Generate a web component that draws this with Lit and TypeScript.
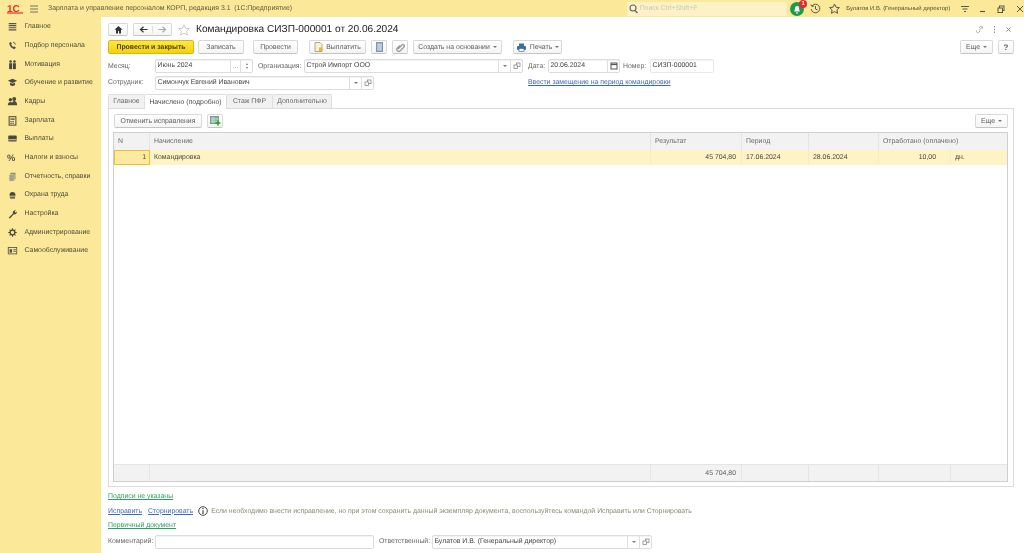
import { LitElement, html, css, svg } from "lit";
import { customElement } from "lit/decorators.js";

const ic = (w: number, h: number, body: unknown) =>
  html`<svg class="ic" width=${w} height=${h} viewBox="0 0 ${w} ${h}">${body}</svg>`;

const menu: [string, unknown][] = [
  ["Главное", svg`<path d="M2 3h9M2 5.500h9M2 8h9M2 10.500h9" stroke="#55534a" stroke-width="1.400"/>`],
  ["Подбор персонала", svg`<path d="M3 3c-1 3 2 7 6 8l1.500-2-2-1.500-1 .7C6.500 7.500 5.500 6.500 5 5.500l.8-1L4.500 2.500z" fill="#55534a"/><path d="M7 2.500a3.500 3.500 0 0 1 3 3" stroke="#55534a" fill="none"/>`],
  ["Мотивация", svg`<rect x="2.500" y="5" width="3.500" height="7" fill="#4a483f"/><rect x="7" y="5" width="3.500" height="7" fill="#4a483f"/><circle cx="4.200" cy="3" r="1.500" fill="#4a483f"/><circle cx="8.800" cy="3" r="1.500" fill="#4a483f"/>`],
  ["Обучение и развитие", svg`<path d="M1 4.500 6.500 2 12 4.500 6.500 7z" fill="#4a483f"/><path d="M3.500 6.500v3l3 1.500 3-1.500v-3l-3 1.500z" fill="#4a483f"/>`],
  ["Кадры", svg`<circle cx="4" cy="4.500" r="2" fill="#4a483f"/><circle cx="8.500" cy="3.500" r="2.300" fill="#4a483f"/><path d="M1 11c0-3 1.500-4 3-4s3 1 3 4zM5.500 11c0-3.500 1.500-5 3-5s3.500 1.500 3.500 5z" fill="#4a483f"/>`],
  ["Зарплата", svg`<rect x="2.500" y="2" width="8" height="10" fill="none" stroke="#4a483f" stroke-width="1.200"/><path d="M4 4h5v1.500H4zM4 7h1.500v1.200H4zM6.500 7H8v1.200H6.500zM4 9.300h1.500v1.200H4zM6.500 9.300H8v1.200H6.500z" fill="#4a483f"/>`],
  ["Выплаты", svg`<rect x="1.500" y="3" width="10" height="7" rx="1" fill="#4a483f"/><rect x="1.500" y="7.500" width="10" height="1" fill="#fbe999"/>`],
  ["Налоги и взносы", svg`<text x="0" y="10.500" font-size="11" font-weight="700" font-family="Liberation Sans" fill="#55534a">%</text>`],
  ["Отчетность, справки", svg`<path d="M4 2h6v8H4z" fill="#8f8d78"/><path d="M2.500 4h6v8h-6z" fill="#a3a18a" stroke="#fbe999" stroke-width=".5"/>`],
  ["Охрана труда", svg`<path d="M3 7a3.500 3.500 0 0 1 7 0v1H3z" fill="#4a483f"/><path d="M3 9h7l-1 2.500H4z" fill="#6b695c"/>`],
  ["Настройка", svg`<path d="M2 11.500 7 6.500a2.800 2.800 0 0 1 3.500-3.700L9 4.500l1 1 1.500-1.500A2.800 2.800 0 0 1 8 7.500l-4.500 5z" fill="#4a483f"/>`],
  ["Администрирование", svg`<circle cx="6.500" cy="6.500" r="2.800" fill="none" stroke="#4a483f" stroke-width="1.600"/><path d="M6.500 1.500v2M6.500 9.500v2M1.500 6.500h2M9.500 6.500h2M3 3l1.400 1.400M8.600 8.600 10 10M10 3 8.600 4.400M4.400 8.600 3 10" stroke="#4a483f" stroke-width="1.300"/>`],
  ["Самообслуживание", svg`<rect x="1.500" y="3" width="10" height="7.500" fill="none" stroke="#55534a"/><rect x="3" y="5" width="3" height="4" fill="#55534a"/><path d="M7.500 5.500h3M7.500 7.500h3" stroke="#55534a"/>`],
];

const dropArrow = html`<span class="arrow"></span>`;
const openIcon = ic(8, 8, svg`<rect x="3.500" y="1" width="3.500" height="3.500" fill="none" stroke="#888" stroke-width=".8"/><rect x="1" y="3" width="3.500" height="3.500" fill="#fff" stroke="#888" stroke-width=".8"/>`);

@customElement("app-root")
export class AppRoot extends LitElement {
  static styles = css`
    :host { display: flex; flex-direction: column; width: 1024px; height: 553px; overflow: hidden; background: #fff;
      font: 6.900px "Liberation Sans", Arial, sans-serif; color: #444; text-rendering: geometricPrecision; filter: blur(.25px); }
    * { box-sizing: border-box; }
    .ic { display: block; flex: none; }
    .top { height: 17px; flex: none; background: #fbe999; display: flex; align-items: center; color: #5c593f; }
    .logo { width: 16px; margin-left: 7px; }
    .burger { margin-left: 7px; }
    .apptitle { margin-left: 10px; width: 580px; white-space: nowrap; }
    .search { width: 161px; height: 14px; background: #fcf2c6; display: flex; align-items: center; gap: 2px; padding-left: 2px; color: #c9c7b8; }
    .bell { margin-left: 3px; position: relative; width: 14px; height: 14px; }
    .badge { position: absolute; right: -3px; top: -2px; width: 8px; height: 8px; border-radius: 50%; background: #e8262c; color: #fff; font-size: 6px; line-height: 8px; text-align: center; font-weight: 700; }
    .hist { margin-left: 6px; }
    .fav { margin-left: 8px; }
    .user { margin-left: 6px; width: 110px; font-size: 5.900px; white-space: nowrap; color: #4f4d38; }
    .tctl { margin-left: 5px; }
    .tctl2 { margin-left: 9px; }
    .tctl3 { margin-left: 11px; }
    .body { flex: 1; min-height: 0; display: flex; }
    .side { width: 101px; flex: none; background: #fbe999; padding-top: .5px; }
    .mi { height: 18.670px; display: flex; align-items: center; color: #4c4a38; white-space: nowrap; }
    .mi .mic { width: 24.500px; flex: none; padding-left: 7px; }
    .mic .ic { width: 11px; height: 11px; }
    .main { flex: 1; min-width: 0; padding: 0 10px 0 7px; display: flex; flex-direction: column; }
    .head { height: 21px; margin-top: 2px; flex: none; display: flex; align-items: center; }
    .btn { height: 13.500px; border: 1px solid #d8d8d8; border-bottom-color: #c4c4c4; border-radius: 2px; background: linear-gradient(#fff, #f4f4f4);
      display: flex; align-items: center; justify-content: center; gap: 3px; color: #5a5a5a; white-space: nowrap; flex: none; padding: 0; }
    .home { width: 20px; }
    .nav { width: 39px; margin-left: 5px; gap: 0; }
    .nav span { flex: 1; display: flex; justify-content: center; }
    .nav span + span { border-left: 1px solid #e0e0e0; }
    .star { margin-left: 6px; }
    .title { margin-left: 6px; font-size: 10.150px; color: #1c1c1c; white-space: nowrap; flex: 1; }
    .hctl { margin-right: 9px; }
    .hctl1 { margin-right: 9px; }
    .hctl2 { margin-right: 2px; }
    .bar { height: 14px; flex: none; display: flex; align-items: center; }
    .primary { width: 86px; background: linear-gradient(#fde64a, #f6d200); border-color: #d6b61c; color: #453f0c; font-weight: 700; }
    .w46 { width: 46px; margin-left: 4px; }
    .w45 { width: 45px; margin-left: 9px; }
    .w57 { width: 57px; margin-left: 11px; }
    .w16 { width: 16px; margin-left: 5px; }
    .w89 { width: 89px; margin-left: 5px; }
    .w49 { width: 49px; margin-left: 11px; }
    .more { width: 33px; margin-left: auto; }
    .help { width: 16px; margin-left: 5px; font-weight: 700; font-size: 8px; }
    .arrow { width: 0; height: 0; border: 2px solid transparent; border-top: 2.500px solid #777; border-bottom: 0; flex: none; }
    .row { height: 14px; flex: none; display: flex; align-items: center; color: #666; white-space: nowrap; }
    .r1 { margin-top: 5px; }
    .r2 { margin-top: 2.500px; }
    .lbl { width: 47px; flex: none; }
    .field { height: 14px; border: 1px solid #dcdcdc; border-radius: 2px; display: flex; align-items: stretch; background: #fff; color: #444; flex: none; box-shadow: inset 0 1px 1px #f2f2f2; }
    .field .v { flex: 1; padding-left: 1.500px; line-height: 12px; overflow: hidden; }
    .cell { width: 12px; border-left: 1px solid #dedede; display: flex; align-items: center; justify-content: center; flex: none; }
    .spin { flex-direction: column; gap: 2px; }
    .up { width: 0; height: 0; border: 1.500px solid transparent; border-bottom: 2px solid #777; border-top: 0; }
    .dn { width: 0; height: 0; border: 1.500px solid transparent; border-top: 2px solid #777; border-bottom: 0; }
    .month { width: 98px; }
    .dots { width: 10px; color: #888; }
    .org { width: 219px; }
    .emp { width: 219px; }
    .date { width: 72px; }
    .num { width: 64px; border-color: #e8e8e8; }
    .l-org { margin-left: 5px; width: 46px; }
    .l-date { margin-left: 5px; width: 20px; }
    .l-num { margin-left: 3px; width: 27px; }
    .link { color: #3f68b5; text-decoration: underline; white-space: nowrap; }
    .green { color: #2f9f5d; text-decoration: underline; white-space: nowrap; }
    .sublink { margin-left: 154px; }
    .tabs { height: 14px; margin-top: 4.500px; flex: none; display: flex; align-items: stretch; color: #666; position: relative; z-index: 1; }
    .tab { background: #f1f1f1; border: 1px solid #dedede; border-left: 0; border-bottom: 0; display: flex; align-items: center; justify-content: center; white-space: nowrap; border-radius: 2px 2px 0 0; }
    .tab:first-child { border-left: 1px solid #dedede; }
    .tab.on { background: #fff; height: 15px; color: #4c4c4c; }
    .t1 { width: 37px; } .t2 { width: 82px; } .t3 { width: 46px; } .t4 { width: 59px; }
    .panel { flex: 1; min-height: 0; border: 1px solid #dcdcdc; padding: 5px 5px 4px 5px; display: flex; flex-direction: column; }
    .ptool { height: 14px; flex: none; display: flex; align-items: center; }
    .cancel { width: 88px; }
    .more2 { width: 33px; margin-left: auto; }
    .table { flex: 1; min-height: 0; margin: 4px 0 0 -1px; border: 1px solid #cfcfcf; display: flex; flex-direction: column; }
    .tr { display: grid; grid-template-columns: 36px 501px 91px 67px 70px 72px 1fr; flex: none; }
    .th { height: 17px; background: #f2f2f2; }
    .th > div { border-right: 1px solid #e4e4e4; padding-left: 4px; display: flex; align-items: center; color: #6a6a6a; white-space: nowrap; }
    .th > div:last-child { border-right: 0; }
    .span2 { grid-column: span 2; }
    .td { height: 15px; background: #fdf3c5; }
    .td > div { border-right: 1px solid #f7ecc0; padding: 0 4px; display: flex; align-items: center; color: #49493e; }
    .td > div:last-child { border-right: 0; }
    .td > .r { justify-content: flex-end; padding-right: 5px; }
    .td > .wide { padding-right: 14px; }
    .td > .cur { background: #fde9a0; border: 1px solid #f1be2b; padding-right: 3px; }
    .spacer { flex: 1; }
    .tf { height: 17px; background: #f2f2f2; border-top: 1px solid #e4e4e4; }
    .tf > div { border-right: 1px solid #e4e4e4; padding: 0 5px; display: flex; align-items: center; color: #5e5e5e; }
    .tf > div:last-child { border-right: 0; }
    .tf > .r { justify-content: flex-end; }
    .foot { height: 66px; flex: none; display: flex; flex-direction: column; }
    .fr { display: flex; align-items: center; height: 14.500px; flex: none; white-space: nowrap; }
    .fr1 { margin-top: 2.500px; }
    .gap6 { margin-left: 6px; }
    .info { margin-left: 5px; margin-right: 3px; }
    .note { color: #8a8972; }
    .comment { width: 219px; }
    .resp { width: 220px; }
    .l-resp { margin-left: 5px; width: 53px; }
    .cmtrow { margin-top: 1.500px; color: #666; }
  `;

  render() {
    return html`
      <div class="top">
        <div class="logo">${ic(16, 11, svg`<text x="0" y="8.500" font-size="10" font-weight="700" font-family="Liberation Sans" fill="#e2342a">1С</text><path d="M0 10h16" stroke="#e2342a" stroke-width="1.200"/>`)}</div>
        <div class="burger">${ic(8, 8, svg`<path d="M0 1h8M0 4h8M0 7h8" stroke="#77735a"/>`)}</div>
        <div class="apptitle">Зарплата и управление персоналом КОРП, редакция 3.1&nbsp; (1С:Предприятие)</div>
        <div class="search">${ic(9, 10, svg`<circle cx="4" cy="4" r="3" fill="none" stroke="#666" stroke-width="1.100"/><path d="M6 6.500 8.500 9" stroke="#666" stroke-width="1.200"/>`)}Поиск Ctrl+Shift+F</div>
        <div class="bell">${ic(14, 14, svg`<circle cx="7" cy="7" r="7" fill="#1f9a4b"/><path d="M4 9.500c1-1 .7-2 1-3.500a2 2 0 0 1 4 0c.3 1.500 0 2.500 1 3.500zM6 10.500h2v1H6z" fill="#fff"/>`)}<span class="badge">1</span></div>
        <div class="hist">${ic(11, 11, svg`<path d="M2 3a4.300 4.300 0 1 1-.8 3" fill="none" stroke="#5b5a48"/><path d="M.8 1.500 2 3.500l2-.5" fill="none" stroke="#5b5a48"/><path d="M5.500 3v3l2 1" fill="none" stroke="#5b5a48"/>`)}</div>
        <div class="fav">${ic(11, 11, svg`<path d="M5.500 1 7 4.200l3.400.4-2.500 2.300.7 3.400-3.100-1.700-3.100 1.700.7-3.400L.6 4.600 4 4.200z" fill="none" stroke="#5b5a48"/>`)}</div>
        <div class="user">Булатов И.В. (Генеральный директор)</div>
        <div class="tctl">${ic(8, 8, svg`<path d="M0 1.500h8M1.500 4h5M3 6.500h2" stroke="#5b5a48"/>`)}</div>
        <div class="tctl2">${ic(8, 8, svg`<path d="M2 6.500h5" stroke="#5b5a48" stroke-width="1.200"/>`)}</div>
        <div class="tctl3">${ic(8, 8, svg`<rect x="2.500" y="1" width="4.500" height="4.500" fill="none" stroke="#5b5a48"/><rect x="1" y="3" width="4.500" height="4.500" fill="#fbe999" stroke="#5b5a48"/>`)}</div>
        <div class="tctl3">${ic(8, 8, svg`<path d="M1 1l6 6M7 1 1 7" stroke="#5b5a48"/>`)}</div>
      </div>
      <div class="body">
        <nav class="side">
          ${menu.map(([t, i]) => html`<div class="mi"><span class="mic">${ic(13, 13, i)}</span>${t}</div>`)}
        </nav>
        <main class="main">
          <div class="head">
            <div class="btn home">${ic(9, 9, svg`<path d="M4.500 1 .5 4.800h1.500V8.500h2V6h1v2.500h2V4.800h1.500z" fill="#333"/>`)}</div>
            <div class="btn nav">
              <span>${ic(9, 7, svg`<path d="M8.500 3.500H2M4.500.8 1.500 3.500l3 2.700" fill="none" stroke="#333" stroke-width="1.200"/>`)}</span>
              <span>${ic(9, 7, svg`<path d="M.5 3.500H7M4.500.8l3 2.700-3 2.700" fill="none" stroke="#aaa" stroke-width="1.200"/>`)}</span>
            </div>
            <div class="star">${ic(12, 12, svg`<path d="M6 .8 7.600 4.300l3.800.4-2.800 2.600.8 3.800L6 9.200l-3.400 1.900.8-3.800L.6 4.700l3.800-.4z" fill="#fff" stroke="#c9c9c9"/>`)}</div>
            <div class="title">Командировка СИЗП-000001 от 20.06.2024</div>
            <div class="hctl">${ic(9, 9, svg`<path d="M4 5.500 7.800 1.800M1.500 5.500a1.500 1.500 0 0 0 2 2L5 6M4 3l1.500-1.500a1.500 1.500 0 0 1 2 2" fill="none" stroke="#aaa"/>`)}</div>
            <div class="hctl1">${ic(3, 9, svg`<path d="M1.500 1v1.500M1.500 3.800v1.500M1.500 6.500V8" stroke="#888"/>`)}</div>
            <div class="hctl2">${ic(7, 7, svg`<path d="M1.500 1.500l4 4M5.500 1.500l-4 4" stroke="#888"/>`)}</div>
          </div>
          <div class="bar">
            <div class="btn primary">Провести и закрыть</div>
            <div class="btn w46">Записать</div>
            <div class="btn w45">Провести</div>
            <div class="btn w57">${ic(9, 10, svg`<path d="M1 .5h5l2 2v7H1z" fill="#f5f1df" stroke="#b5a878"/><path d="M5 5.500h3.500v3.500H5z" fill="#e6b93a"/>`)}Выплатить</div>
            <div class="btn w16">${ic(7, 10, svg`<rect x=".5" y=".5" width="6" height="9" fill="#a8bcd2" stroke="#7e93ab"/><path d="M1.500 3h4M1.500 5h4M1.500 7h4" stroke="#e4ecf4" stroke-width=".7"/>`)}</div>
            <div class="btn w16">${ic(9, 9, svg`<path d="M2 6 6 2a1.400 1.400 0 0 1 2 2L4 8a2 2 0 0 1-3-2.500L4 2.500" fill="none" stroke="#999" stroke-width="1.300"/>`)}</div>
            <div class="btn w89">Создать на основании ${dropArrow}</div>
            <div class="btn w49">${ic(11, 9, svg`<rect x="3" y=".5" width="5" height="2.500" fill="#3f6d9c"/><rect x="1" y="3" width="9" height="4" rx="1" fill="#3f6d9c"/><rect x="3" y="5.500" width="5" height="3" fill="#fff" stroke="#3f6d9c" stroke-width=".7"/>`)}Печать ${dropArrow}</div>
            <div class="btn more">Еще ${dropArrow}</div>
            <div class="btn help">?</div>
          </div>
          <div class="row r1">
            <span class="lbl">Месяц:</span>
            <div class="field month"><span class="v">Июнь 2024</span><span class="cell dots">...</span><span class="cell spin"><i class="up"></i><i class="dn"></i></span></div>
            <span class="l-org">Организация:</span>
            <div class="field org"><span class="v">Строй Импорт ООО</span><span class="cell">${dropArrow}</span><span class="cell">${openIcon}</span></div>
            <span class="l-date">Дата:</span>
            <div class="field date"><span class="v">20.06.2024</span><span class="cell">${ic(8, 8, svg`<rect x="1" y="1" width="6" height="6" fill="none" stroke="#555"/><path d="M1 2.500h6" stroke="#555" stroke-width="1.200"/>`)}</span></div>
            <span class="l-num">Номер:</span>
            <div class="field num"><span class="v">СИЗП-000001</span></div>
          </div>
          <div class="row r2">
            <span class="lbl">Сотрудник:</span>
            <div class="field emp"><span class="v">Симончук Евгений Иванович</span><span class="cell">${dropArrow}</span><span class="cell">${openIcon}</span></div>
            <span class="link sublink">Ввести замещение на период командировки</span>
          </div>
          <div class="tabs">
            <div class="tab t1">Главное</div>
            <div class="tab t2 on">Начислено (подробно)</div>
            <div class="tab t3">Стаж ПФР</div>
            <div class="tab t4">Дополнительно</div>
          </div>
          <section class="panel">
            <div class="ptool">
              <div class="btn cancel">Отменить исправления</div>
              <div class="btn w16">${ic(11, 10, svg`<rect x=".5" y=".5" width="8" height="7" fill="#8fb9a3" stroke="#6e9a84"/><path d="M3 .5v7M.5 3h8M.5 5.300h8" stroke="#dcebe2" stroke-width=".6"/><path d="M8 4.500v5M5.500 7h5" stroke="#2aa52a" stroke-width="1.600"/>`)}</div>
              <div class="btn more2">Еще ${dropArrow}</div>
            </div>
            <div class="table">
              <div class="tr th">
                <div>N</div><div>Начисление</div><div>Результат</div><div>Период</div><div></div><div class="span2">Отработано (оплачено)</div>
              </div>
              <div class="tr td">
                <div class="r cur">1</div><div>Командировка</div><div class="r">45 704,80</div><div>17.06.2024</div><div>28.06.2024</div><div class="r wide">10,00</div><div>дн.</div>
              </div>
              <div class="spacer"></div>
              <div class="tr tf">
                <div></div><div></div><div class="r">45 704,80</div><div></div><div></div><div></div><div></div>
              </div>
            </div>
          </section>
          <div class="foot">
            <div class="fr fr1"><span class="green">Подписи не указаны</span></div>
            <div class="fr">
              <span class="link">Исправить</span><span class="link gap6">Сторнировать</span>
              <span class="info">${ic(10, 10, svg`<circle cx="5" cy="5" r="4.300" fill="none" stroke="#444"/><path d="M5 4.300V8M5 2v1.300" stroke="#444" stroke-width="1.200"/>`)}</span>
              <span class="note">Если необходимо внести исправление, но при этом сохранить данный экземпляр документа, воспользуйтесь командой Исправить или Сторнировать</span>
            </div>
            <div class="fr"><span class="green">Первичный документ</span></div>
            <div class="row cmtrow">
              <span class="lbl">Комментарий:</span>
              <div class="field comment"><span class="v"></span></div>
              <span class="l-resp">Ответственный:</span>
              <div class="field resp"><span class="v">Булатов И.В. (Генеральный директор)</span><span class="cell">${dropArrow}</span><span class="cell">${openIcon}</span></div>
            </div>
          </div>
        </main>
      </div>
    `;
  }
}
